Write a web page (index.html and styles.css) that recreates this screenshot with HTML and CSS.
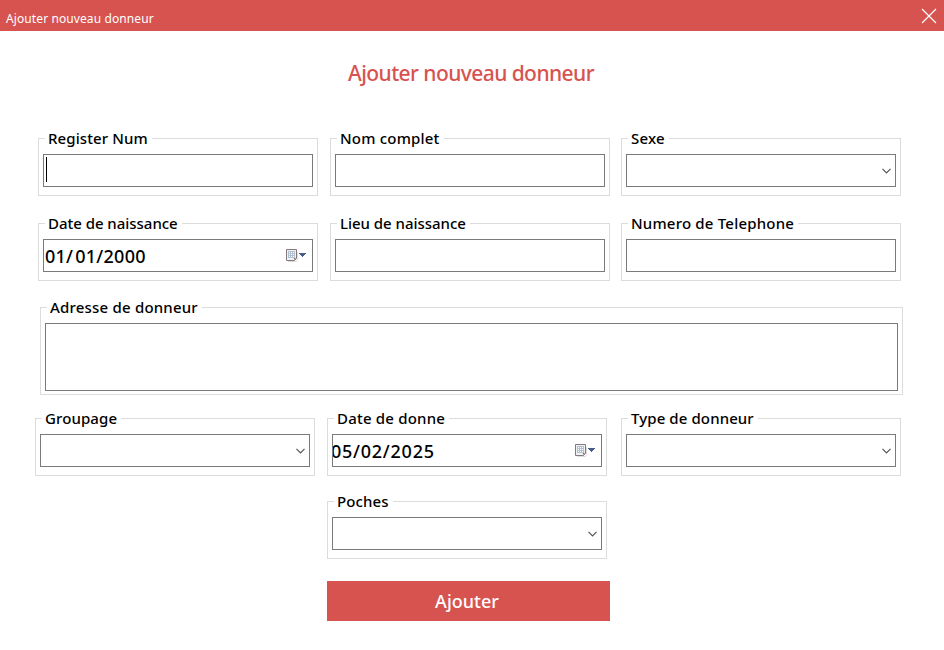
FILE: index.html
```html
<!DOCTYPE html>
<html lang="fr">
<head>
<meta charset="utf-8">
<title>Ajouter nouveau donneur</title>
<link rel="stylesheet" href="styles.css">
</head>
<body>
<svg class="defs" width="0" height="0">
  <symbol id="chevron" viewBox="0 0 9 6"><path d="M.5.8 4.500 4.8 8.500.8" fill="none" stroke="#555" stroke-width="1.200"/></symbol>
  <symbol id="calendar" viewBox="0 0 22 14">
    <path d="M2 12.500h8.500l1-2V3" fill="none" stroke="#ddd"/>
    <path d="M.5.5h10v9l-2 2h-8z" fill="#eef1f5" stroke="#85787a"/>
    <path d="M2 2h7v7H2z" fill="#b3c0d0"/>
    <path d="M3 3h1v1H3zM5 3h1v1H5zM7 3h1v1H7zM3 5h1v1H3zM5 5h1v1H5zM7 5h1v1H7zM3 7h1v1H3zM5 7h1v1H5zM7 7h1v1H7z" fill="#fff"/>
    <path d="M8 11V9h2z" fill="#756b6f"/>
    <path d="M13 4h7v1h-1v1h-1v1h-1v1h-1V7h-1V6h-1V5h-1z" fill="#465d8c"/>
  </symbol>
</svg>
<header class="titlebar">
  <span class="caption">Ajouter nouveau donneur</span>
  <svg class="close" width="16" height="16" viewBox="0 0 16 16"><path d="M1 1l14 14M15 1L1 15" stroke="#fff" stroke-width="1.200"/></svg>
</header>
<main>
  <h1><span>Ajouter nouveau donneur</span></h1>
  <div class="row">
    <div class="group"><label>Register Num</label><div class="field"><i class="caret"></i></div></div>
    <div class="group"><label class="wide">Nom complet</label><div class="field"></div></div>
    <div class="group"><label class="wide">Sexe</label><div class="field select"><svg class="chevron"><use href="#chevron"/></svg></div></div>
  </div>
  <div class="row">
    <div class="group"><label class="tight">Date de naissance</label><div class="field date"><span>01/<i class="slot"></i>01/2000</span><svg class="calendar"><use href="#calendar"/></svg></div></div>
    <div class="group"><label class="tight">Lieu de naissance</label><div class="field"></div></div>
    <div class="group"><label class="wide">Numero de Telephone</label><div class="field"></div></div>
  </div>
  <div class="group address"><label class="wide">Adresse de donneur</label><div class="field"></div></div>
  <div class="row donation">
    <div class="group"><label>Groupage</label><div class="field select"><svg class="chevron"><use href="#chevron"/></svg></div></div>
    <div class="group"><label class="wide">Date de donne</label><div class="field date clipped"><span>05/02/2025</span><svg class="calendar"><use href="#calendar"/></svg></div></div>
    <div class="group"><label>Type de donneur</label><div class="field select"><svg class="chevron"><use href="#chevron"/></svg></div></div>
  </div>
  <div class="group bags"><label>Poches</label><div class="field select"><svg class="chevron"><use href="#chevron"/></svg></div></div>
  <button type="button">Ajouter</button>
</main>
</body>
</html>
```
FILE: styles.css
```css
* { box-sizing: border-box; }
body {
  margin: 0;
  height: 650px;
  overflow: hidden;
  background: #fff;
  color: #000;
  font-family: "Noto Sans", "Open Sans", sans-serif;
}
.defs { display: block; }
.titlebar {
  display: flex;
  justify-content: space-between;
  height: 31px;
  padding: 8px 7px 0 6px;
  background: #d7534f;
  color: #fff;
}
.caption { font-size: 12px; line-height: 21px; letter-spacing: 0.1px; white-space: nowrap; }
.close { display: block; }
h1 {
  margin: 0;
  height: 107px;
  padding: 27px 0 0 348px;
  color: #d7534f;
  font-size: 21px;
  line-height: 30px;
  letter-spacing: -0.57px;
  font-weight: 550;
  white-space: nowrap;
}
.row {
  display: grid;
  grid-template-columns: 280px 280px 280px;
  column-gap: 12px;
  margin: 0 0 27px 38px;
}
.row .group:nth-child(3) { margin-left: -1px; margin-right: 1px; }
.group {
  width: 280px;
  height: 58px;
  padding: 0 4px;
  border: 1px solid #dcdcdc;
}
.group label {
  display: block;
  width: fit-content;
  height: 22px;
  margin: -11px 0 4px 2px;
  padding: 0 4px 0 3px;
  background: #fff;
  font-size: 15px;
  line-height: 20px;
  letter-spacing: 0.1px;
  font-weight: 550;
  white-space: nowrap;
}
.group .wide { letter-spacing: 0.2px; }
.group .tight { letter-spacing: -0.03px; }
.field {
  display: flex;
  height: 33px;
  border: 1px solid #7a7a7a;
  overflow: hidden;
}
.caret { width: 1px; height: 25px; margin: 2px 0 0 2px; background: #000; }
.select { justify-content: flex-end; align-items: center; padding-right: 4px; }
.chevron { width: 9px; height: 6px; }
.date { justify-content: space-between; padding: 0 4px 0 1px; }
.date span { font-size: 18px; line-height: 33px; letter-spacing: 0.25px; font-weight: 550; white-space: nowrap; }
.slot { display: inline-block; width: 2px; }
.clipped { padding-left: 0; }
.clipped span { margin-left: -2px; letter-spacing: 0.75px; }
.calendar { width: 22px; height: 14px; margin-top: 9px; }
.address { width: 863px; height: 88px; margin: -1px 0 0 40px; }
.address .field { height: 68px; }
.donation { margin: 23px 0 25px 35px; }
.donation .group:nth-child(3) { margin-left: 2px; margin-right: -2px; }
.bags { margin-left: 327px; }
button {
  display: block;
  width: 283px;
  height: 40px;
  margin: 22px 0 0 327px;
  padding: 0 3px 0 0;
  border: 0;
  background: #d7534f;
  color: #fff;
  font: 550 18px/40px "Noto Sans", "Open Sans", sans-serif;
}
```
